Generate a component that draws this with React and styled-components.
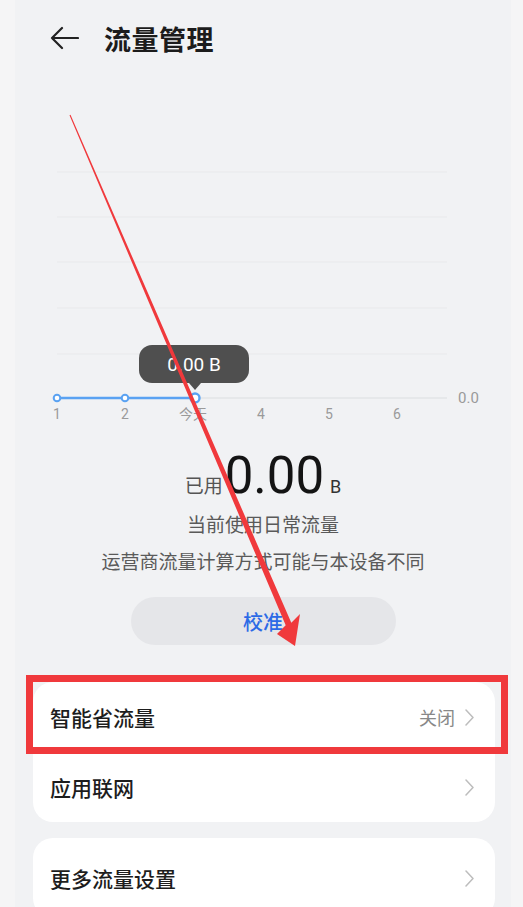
import React from "react";
import styled, { createGlobalStyle } from "styled-components";

const Global = createGlobalStyle`
  html, body { margin: 0; padding: 0; background: #f5f5f6; }
  body { font-family: Roboto, "Noto Sans CJK SC", sans-serif; }
  * { box-sizing: border-box; }
`;

const Root = styled.div`
  position: relative;
  width: 523px;
  min-height: 907px;
  overflow: hidden;
`;

const Page = styled.div`
  margin-left: 15px;
  width: 496px;
  min-height: 907px;
  background: #f1f2f4;
  display: flex;
  flex-direction: column;
`;

const Header = styled.div`
  height: 76px;
  display: flex;
  align-items: center;
  padding-left: 35px;
  gap: 25px;
`;

const Title = styled.h1`
  margin: 0;
  font-family: "Noto Sans CJK SC", sans-serif;
  font-size: 27px;
  font-weight: 700;
  color: #1c1c1c;
  letter-spacing: 0.5px;
`;

const ChartWrap = styled.div`
  position: relative;
  height: 350px;
`;

const Tooltip = styled.div`
  position: absolute;
  left: 124px;
  top: 269px;
  width: 110px;
  height: 38px;
  border-radius: 13px;
  background: #4f4f4f;
  color: #fff;
  font-family: Roboto, sans-serif;
  font-size: 19px;
  display: flex;
  align-items: center;
  justify-content: center;
  &::after {
    content: "";
    position: absolute;
    left: 50px;
    bottom: -7px;
    border-left: 6px solid transparent;
    border-right: 6px solid transparent;
    border-top: 7px solid #4f4f4f;
  }
`;

const Stats = styled.div`
  display: flex;
  flex-direction: column;
  align-items: center;
  margin-top: 20px;
`;

const UsedLine = styled.div`
  height: 60px;
  display: flex;
  align-items: baseline;
  justify-content: center;
  line-height: 60px;
`;

const UsedLabel = styled.span`
  font-family: "Noto Sans CJK SC", sans-serif;
  font-size: 19px;
  color: #555;
  margin-right: 2px;
`;

const UsedValue = styled.span`
  font-family: Roboto, sans-serif;
  font-size: 51px;
  font-weight: 400;
  color: #141414;
`;

const UsedUnit = styled.span`
  font-family: Roboto, sans-serif;
  font-size: 18px;
  color: #333;
  margin-left: 6px;
`;

const Note = styled.div`
  font-family: "Noto Sans CJK SC", sans-serif;
  font-size: 19px;
  line-height: 28px;
  color: #5a5a5a;
  margin-top: ${(p) => p.$gap}px;
`;

const CalibrateButton = styled.button`
  margin-top: 22px;
  width: 265px;
  height: 48px;
  border: none;
  border-radius: 24px;
  background: #e5e6e9;
  color: #2c6ae6;
  font-family: "Noto Sans CJK SC", sans-serif;
  font-size: 20px;
  font-weight: 500;
  cursor: pointer;
`;

const Card = styled.div`
  margin: ${(p) => p.$top}px 16px 0 18px;
  background: #fff;
  border-radius: 20px;
  display: flex;
  flex-direction: column;
`;

const Row = styled.div`
  height: ${(p) => p.$h || 70}px;
  padding: 0 21px 0 17px;
  display: flex;
  align-items: center;
`;

const RowLabel = styled.span`
  flex: 1;
  font-family: "Noto Sans CJK SC", sans-serif;
  font-size: 21px;
  font-weight: 500;
  color: #1d1d1d;
`;

const RowValue = styled.span`
  font-family: "Noto Sans CJK SC", sans-serif;
  font-size: 18px;
  color: #888;
  margin-right: 10px;
`;

const Overlay = styled.svg`
  position: absolute;
  left: 0;
  top: 0;
  pointer-events: none;
`;

const Chevron = () => (
  <svg width="9" height="17" viewBox="0 0 9 17">
    <path d="M1 1 L8 8.5 L1 16" fill="none" stroke="#bdbdbd" strokeWidth="1.5" strokeLinecap="round" strokeLinejoin="round" />
  </svg>
);

const BackIcon = () => (
  <svg width="29" height="24" viewBox="0 0 29 24">
    <path d="M28 12 H2 M12 2 L2 12 L12 22" fill="none" stroke="#222" strokeWidth="2.2" strokeLinecap="round" strokeLinejoin="round" />
  </svg>
);

const gridYs = [96, 141, 186, 232, 278];
const labels = ["1", "2", "今天", "4", "5", "6"];

const Chart = () => (
  <ChartWrap>
    <svg width="496" height="350" viewBox="0 0 496 350">
      {gridYs.map((y) => (
        <line key={y} x1="42" x2="432" y1={y} y2={y} stroke="#e8e9eb" strokeWidth="1" />
      ))}
      <line x1="42" x2="432" y1="322" y2="322" stroke="#dcdddf" strokeWidth="1.2" />
      <line x1="42" x2="180" y1="322" y2="322" stroke="#5aa2f2" strokeWidth="2.4" />
      <circle cx="42" cy="322" r="3.3" fill="#fff" stroke="#5aa2f2" strokeWidth="2" />
      <circle cx="110" cy="322" r="3.3" fill="#fff" stroke="#5aa2f2" strokeWidth="2" />
      <circle cx="180" cy="322" r="4.5" fill="#fff" stroke="#5aa2f2" strokeWidth="2.4" />
      {labels.map((l, i) => (
        <text
          key={l}
          x={42 + i * 68}
          y="343"
          textAnchor="middle"
          fontSize="14"
          fill="#9a9a9a"
          fontFamily='Roboto, "Noto Sans CJK SC", sans-serif'
        >
          {l}
        </text>
      ))}
      <text x="443" y="327" fontSize="15" fill="#9a9a9a" fontFamily="Roboto, sans-serif">
        0.0
      </text>
    </svg>
    <Tooltip>0.00 B</Tooltip>
  </ChartWrap>
);

export default function App() {
  return (
    <Root>
      <Global />
      <Page>
        <Header>
          <BackIcon />
          <Title>流量管理</Title>
        </Header>
        <Chart />
        <Stats>
          <UsedLine>
            <UsedLabel>已用</UsedLabel>
            <UsedValue>0.00</UsedValue>
            <UsedUnit>B</UsedUnit>
          </UsedLine>
          <Note $gap={4}>当前使用日常流量</Note>
          <Note $gap={9}>运营商流量计算方式可能与本设备不同</Note>
          <CalibrateButton>校准</CalibrateButton>
        </Stats>
        <Card $top={37}>
          <Row>
            <RowLabel>智能省流量</RowLabel>
            <RowValue>关闭</RowValue>
            <Chevron />
          </Row>
          <Row>
            <RowLabel>应用联网</RowLabel>
            <Chevron />
          </Row>
        </Card>
        <Card $top={16}>
          <Row $h={80}>
            <RowLabel>更多流量设置</RowLabel>
            <Chevron />
          </Row>
        </Card>
      </Page>
      <Overlay width="523" height="907" viewBox="0 0 523 907">
        <polygon
          points="70.5,114.8 291.3,622.8 300,614 295,646 277,634 285.7,625.2 69.5,115.2"
          fill="#f0393c"
        />
        <rect x="29.5" y="678.5" width="475" height="72" fill="none" stroke="#f0393c" strokeWidth="7" />
      </Overlay>
    </Root>
  );
}
